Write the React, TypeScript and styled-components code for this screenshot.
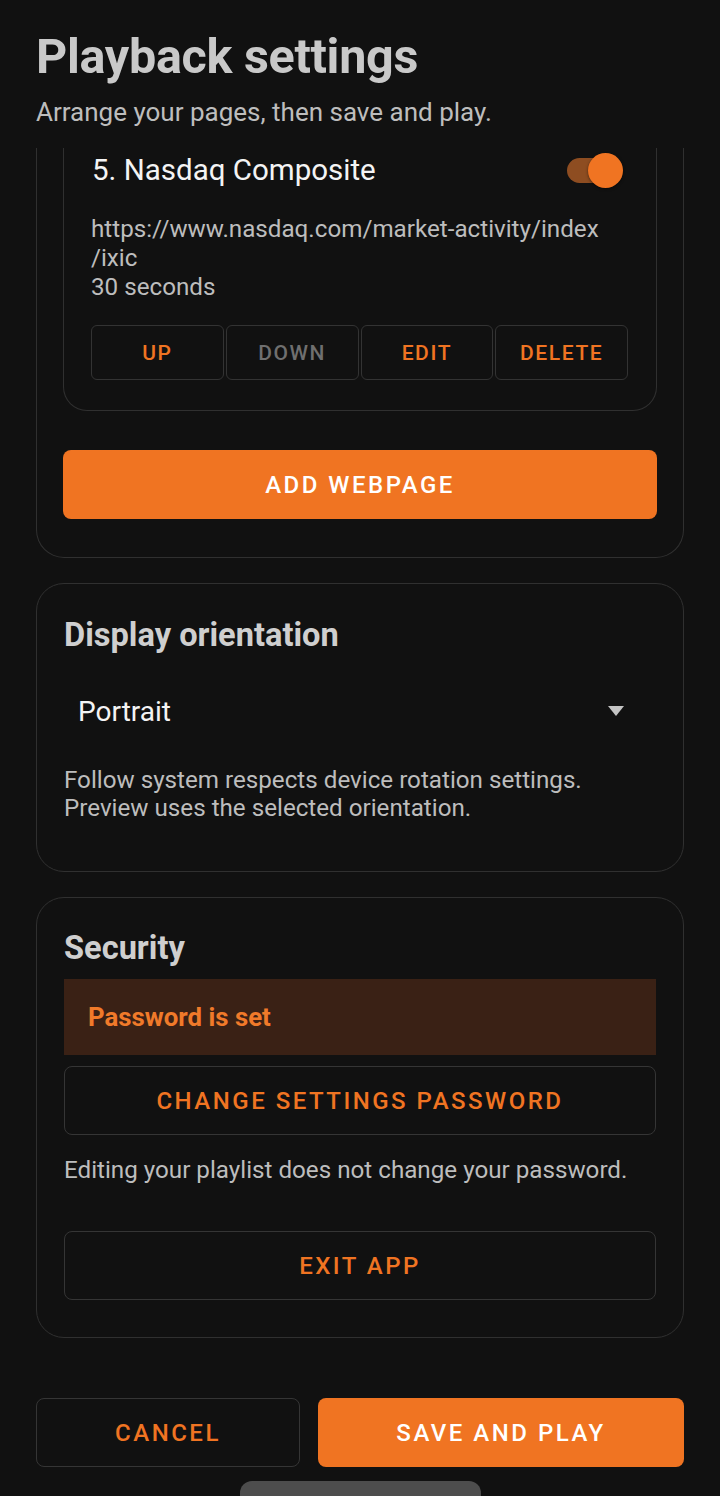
import React from "react";
import styled, { createGlobalStyle } from "styled-components";

const ORANGE = "#f07422";
const BORDER = "#303030";

const Global = createGlobalStyle`
  html, body { margin: 0; padding: 0; background: #111111; }
  body { font-family: Roboto, "Noto Sans", "Liberation Sans", sans-serif; -webkit-font-smoothing: antialiased; }
  * { box-sizing: border-box; }
`;

const Page = styled.div`
  width: 720px;
  height: 1496px;
  background: #111111;
  display: flex;
  flex-direction: column;
  overflow: hidden;
`;

const Header = styled.header`
  padding: 31px 36px 20px;
  display: flex;
  flex-direction: column;
`;

const Title = styled.h1`
  margin: 0;
  font-size: 48.5px;
  line-height: 52px;
  font-weight: 700;
  color: #c9c9c9;
  letter-spacing: -0.3px;
`;

const Subtitle = styled.p`
  margin: 13px 0 0;
  font-size: 26px;
  line-height: 32px;
  color: #bdbdbd;
`;

const Scroll = styled.main`
  flex: 1;
  overflow: hidden;
  padding: 0 36px;
  display: flex;
  flex-direction: column;
  gap: 25px;
`;

const Card = styled.section<{ $clipped?: boolean; $pad?: string }>`
  border: 1px solid ${BORDER};
  border-radius: 28px;
  ${(p) => (p.$clipped ? "border-top: none; border-top-left-radius: 0; border-top-right-radius: 0;" : "")}
  padding: ${(p) => p.$pad || "32px 27px 36px"};
  display: flex;
  flex-direction: column;
`;

const ItemCard = styled.div<{ $clipped?: boolean }>`
  border: 1px solid ${BORDER};
  border-radius: 24px;
  ${(p) => (p.$clipped ? "border-top: none; border-top-left-radius: 0; border-top-right-radius: 0;" : "")}
  padding: 0 28px 30px 27px;
  display: flex;
  flex-direction: column;
`;

const ItemHead = styled.div`
  height: 44px;
  display: flex;
  align-items: center;
  justify-content: space-between;
`;

const ItemTitle = styled.div`
  font-size: 29.5px;
  color: #f4f4f4;
  padding-left: 1px;
`;

const Switch = styled.span`
  position: relative;
  width: 56px;
  height: 35px;
  margin-right: 5px;
  display: inline-block;
`;

const Track = styled.span`
  position: absolute;
  left: 0;
  top: 5px;
  width: 46px;
  height: 25px;
  border-radius: 12.5px;
  background: #8e4d21;
`;

const Thumb = styled.span`
  position: absolute;
  right: 0;
  top: 0;
  width: 35px;
  height: 35px;
  border-radius: 50%;
  background: ${ORANGE};
  box-shadow: 0 1px 3px rgba(0, 0, 0, 0.5);
`;

const Meta = styled.div`
  margin-top: 23px;
  font-size: 24.2px;
  line-height: 29px;
  color: #bdbdbd;
`;

const ButtonRow = styled.div`
  margin-top: 23px;
  display: grid;
  grid-template-columns: repeat(4, 1fr);
  gap: 2px;
`;

const SmallButton = styled.button<{ $disabled?: boolean }>`
  height: 55px;
  background: transparent;
  border: 1.5px solid #333333;
  border-radius: 6px;
  font-family: inherit;
  font-size: 21px;
  font-weight: 500;
  letter-spacing: 1.6px;
  color: ${(p) => (p.$disabled ? "#6f6f6f" : ORANGE)};
  padding: 0;
`;

const BigButton = styled.button<{ $variant: "filled" | "outlined"; $mt?: number }>`
  height: 69px;
  width: 100%;
  margin-top: ${(p) => p.$mt ?? 0}px;
  border-radius: 8px;
  font-family: inherit;
  font-size: 24px;
  font-weight: 500;
  letter-spacing: 2.5px;
  padding: 0;
  ${(p) =>
    p.$variant === "filled"
      ? `background: ${ORANGE}; color: #ffffff; border: none;`
      : `background: transparent; color: ${ORANGE}; border: 1.5px solid #353535;`}
`;

const SectionTitle = styled.h2`
  margin: 0;
  font-size: 32.6px;
  line-height: 36px;
  font-weight: 700;
  color: #cfcfcf;
`;

const Select = styled.div`
  margin-top: 30px;
  height: 56px;
  padding: 0 32px 0 14px;
  display: flex;
  align-items: center;
  justify-content: space-between;
  font-size: 28px;
  color: #f4f4f4;
`;

const Caret = styled.span`
  width: 0;
  height: 0;
  border-left: 8px solid transparent;
  border-right: 8px solid transparent;
  border-top: 10px solid #c4c4c4;
`;

const Helper = styled.p<{ $mt: number }>`
  margin: ${(p) => p.$mt}px 0 0;
  font-size: 24.2px;
  line-height: 28px;
  color: #bdbdbd;
`;

const Banner = styled.div`
  margin-top: 13px;
  height: 76px;
  background: #3a2115;
  padding: 0 24px;
  display: flex;
  align-items: center;
  font-size: 25.8px;
  font-weight: 700;
  color: #f07a2a;
`;

const Footer = styled.footer`
  padding: 0 36px;
  display: flex;
  flex-direction: column;
  align-items: center;
`;

const FooterRow = styled.div`
  width: 100%;
  display: grid;
  grid-template-columns: 264px 1fr;
  gap: 18px;
`;

const HomeBar = styled.div`
  margin-top: 14px;
  width: 241px;
  height: 15px;
  border-radius: 12px 12px 0 0;
  background: #4d4d4d;
`;

export default function App() {
  return (
    <Page>
      <Global />
      <Header>
        <Title>Playback settings</Title>
        <Subtitle>Arrange your pages, then save and play.</Subtitle>
      </Header>
      <Scroll>
        <Card $clipped $pad="0 26px 38px">
          <ItemCard $clipped>
            <ItemHead>
              <ItemTitle>5. Nasdaq Composite</ItemTitle>
              <Switch>
                <Track />
                <Thumb />
              </Switch>
            </ItemHead>
            <Meta>
              https://www.nasdaq.com/market-activity/index
              <br />
              /ixic
              <br />
              30 seconds
            </Meta>
            <ButtonRow>
              <SmallButton>UP</SmallButton>
              <SmallButton $disabled>DOWN</SmallButton>
              <SmallButton>EDIT</SmallButton>
              <SmallButton>DELETE</SmallButton>
            </ButtonRow>
          </ItemCard>
          <BigButton $variant="filled" $mt={39}>
            ADD WEBPAGE
          </BigButton>
        </Card>

        <Card $pad="33px 27px 49px">
          <SectionTitle>Display orientation</SectionTitle>
          <Select>
            <span>Portrait</span>
            <Caret />
          </Select>
          <Helper $mt={27}>
            Follow system respects device rotation settings.
            <br />
            Preview uses the selected orientation.
          </Helper>
        </Card>

        <Card $pad="32px 27px 37px">
          <SectionTitle>Security</SectionTitle>
          <Banner>Password is set</Banner>
          <BigButton $variant="outlined" $mt={11}>
            CHANGE SETTINGS PASSWORD
          </BigButton>
          <Helper $mt={21}>Editing your playlist does not change your password.</Helper>
          <BigButton $variant="outlined" $mt={47}>
            EXIT APP
          </BigButton>
        </Card>
      </Scroll>
      <Footer>
        <FooterRow>
          <BigButton $variant="outlined">CANCEL</BigButton>
          <BigButton $variant="filled">SAVE AND PLAY</BigButton>
        </FooterRow>
        <HomeBar />
      </Footer>
    </Page>
  );
}
